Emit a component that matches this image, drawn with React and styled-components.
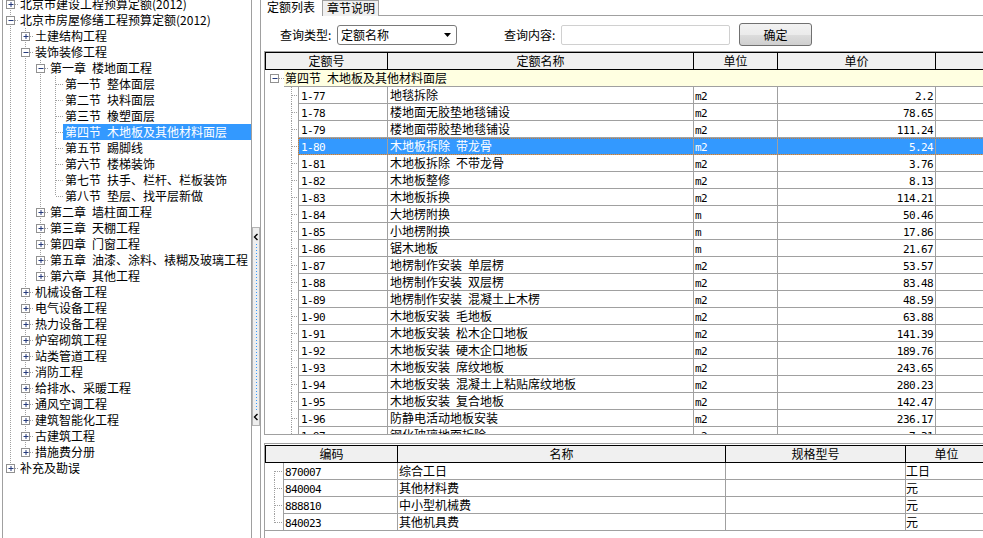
import React from 'react'
import styled, { createGlobalStyle } from 'styled-components'

const CJK = '"Noto Sans CJK SC", "Noto Sans", sans-serif'
const MONO = '"DejaVu Sans Mono", "Liberation Mono", monospace'
const LINE = '#a0a0a0'
const BLUE = '#3399ff'
const sp = '\u2002'

const leaves = (list) => list.map((label) => ({ label }))

const treeData = [
  { label: '北京市建设工程预算定额(2012)', closed: true },
  {
    label: '北京市房屋修缮工程预算定额(2012)',
    children: [
      { label: '土建结构工程', closed: true },
      {
        label: '装饰装修工程',
        children: [
          {
            label: `第一章${sp}楼地面工程`,
            children: leaves([
              `第一节${sp}整体面层`,
              `第二节${sp}块料面层`,
              `第三节${sp}橡塑面层`,
              `第四节${sp}木地板及其他材料面层`,
              `第五节${sp}踢脚线`,
              `第六节${sp}楼梯装饰`,
              `第七节${sp}扶手、栏杆、栏板装饰`,
              `第八节${sp}垫层、找平层新做`,
            ]),
          },
          { label: `第二章${sp}墙柱面工程`, closed: true },
          { label: `第三章${sp}天棚工程`, closed: true },
          { label: `第四章${sp}门窗工程`, closed: true },
          { label: `第五章${sp}油漆、涂料、裱糊及玻璃工程`, closed: true },
          { label: `第六章${sp}其他工程`, closed: true },
        ],
      },
      { label: '机械设备工程', closed: true },
      { label: '电气设备工程', closed: true },
      { label: '热力设备工程', closed: true },
      { label: '炉窑砌筑工程', closed: true },
      { label: '站类管道工程', closed: true },
      { label: '消防工程', closed: true },
      { label: '给排水、采暖工程', closed: true },
      { label: '通风空调工程', closed: true },
      { label: '建筑智能化工程', closed: true },
      { label: '古建筑工程', closed: true },
      { label: '措施费分册', closed: true },
    ],
  },
  { label: '补充及勘误', closed: true },
]

const SELECTED = `第四节${sp}木地板及其他材料面层`

function flatten(nodes, depth = 0, guides = []) {
  return nodes.flatMap((node, i) => {
    const hasNext = i < nodes.length - 1
    const row = {
      label: node.label,
      depth,
      guides,
      hasNext,
      first: depth === 0 && i === 0,
      box: node.children ? 'minus' : node.closed ? 'plus' : null,
    }
    const kids = node.children ? flatten(node.children, depth + 1, [...guides, hasNext]) : []
    return [row, ...kids]
  })
}

const quotas = [
  ['1-77', '地毯拆除', 'm2', '2.2'],
  ['1-78', '楼地面无胶垫地毯铺设', 'm2', '78.65'],
  ['1-79', '楼地面带胶垫地毯铺设', 'm2', '111.24'],
  ['1-80', `木地板拆除${sp}带龙骨`, 'm2', '5.24'],
  ['1-81', `木地板拆除${sp}不带龙骨`, 'm2', '3.76'],
  ['1-82', '木地板整修', 'm2', '8.13'],
  ['1-83', '木地板拆换', 'm2', '114.21'],
  ['1-84', '大地楞附换', 'm', '50.46'],
  ['1-85', '小地楞附换', 'm', '17.86'],
  ['1-86', '锯木地板', 'm', '21.67'],
  ['1-87', `地楞制作安装${sp}单层楞`, 'm2', '53.57'],
  ['1-88', `地楞制作安装${sp}双层楞`, 'm2', '83.48'],
  ['1-89', `地楞制作安装${sp}混凝土上木楞`, 'm2', '48.59'],
  ['1-90', `木地板安装${sp}毛地板`, 'm2', '63.88'],
  ['1-91', `木地板安装${sp}松木企口地板`, 'm2', '141.39'],
  ['1-92', `木地板安装${sp}硬木企口地板`, 'm2', '189.76'],
  ['1-93', `木地板安装${sp}席纹地板`, 'm2', '243.65'],
  ['1-94', `木地板安装${sp}混凝土上粘贴席纹地板`, 'm2', '280.23'],
  ['1-95', `木地板安装${sp}复合地板`, 'm2', '142.47'],
  ['1-96', '防静电活动地板安装', 'm2', '236.17'],
  ['1-97', '钢化玻璃地面拆除', 'm2', '7.31'],
]

const resources = [
  ['870007', '综合工日', '', '工日'],
  ['840004', '其他材料费', '', '元'],
  ['888810', '中小型机械费', '', '元'],
  ['840023', '其他机具费', '', '元'],
]

const quotaCols = [122, 306, 84, 158, 60]
const resourceCols = [132, 328, 180, 82]

function ExpandBox({ x, open }) {
  return (
    <g>
      <rect x={x - 4} y={4.5} width={8} height={8} fill='#fff' stroke='#919191' />
      <line x1={x - 2} y1={8.5} x2={x + 3} y2={8.5} stroke='#24397a' />
      {!open && <line x1={x + 0.5} y1={6} x2={x + 0.5} y2={11} stroke='#24397a' />}
    </g>
  )
}

function Guide({ line }) {
  return (
    <LinesSvg width='15' height='16'>
      {line && <line x1='7.5' y1='0' x2='7.5' y2='16' stroke={LINE} strokeDasharray='1 1' />}
    </LinesSvg>
  )
}

function Joint({ row }) {
  return (
    <LinesSvg width='15' height='16'>
      {!row.first && <line x1='7.5' y1='0' x2='7.5' y2='8' stroke={LINE} strokeDasharray='1 1' />}
      {row.hasNext && <line x1='7.5' y1='8' x2='7.5' y2='16' stroke={LINE} strokeDasharray='1 1' />}
      <line x1='8' y1='8.5' x2='15' y2='8.5' stroke={LINE} strokeDasharray='1 1' />
      {row.box && <ExpandBox x={7.5} open={row.box === 'minus'} />}
    </LinesSvg>
  )
}

function Chevron() {
  return (
    <ChevronSvg width='6' height='8'>
      <path d='M4.5 1 L1.5 4 L4.5 7' fill='none' stroke='#000' strokeWidth='1.4' />
    </ChevronSvg>
  )
}

function TreePanel() {
  const rows = flatten(treeData)
  return (
    <TreePane>
      <TreeList>
        {rows.map((row) => (
          <TreeRow key={row.label}>
            {row.guides.map((g, i) => (
              <Guide key={i} line={g} />
            ))}
            <Joint row={row} />
            <TreeLabel $selected={row.label === SELECTED}>{row.label}</TreeLabel>
          </TreeRow>
        ))}
      </TreeList>
    </TreePane>
  )
}

function QuotaGrid() {
  return (
    <GridBox $height={384}>
      <HeadRow>
        {['定额号', '定额名称', '单位', '单价', ''].map((t, i) => (
          <HeadCell key={i} $w={quotaCols[i]}>
            {t}
          </HeadCell>
        ))}
      </HeadRow>
      <GroupRow>
        <LinesSvg width='19' height='17'>
          <ExpandBox x={9.5} open />
          <line x1='14' y1='8.5' x2='19' y2='8.5' stroke={LINE} strokeDasharray='1 1' />
        </LinesSvg>
        <GroupCell>第四节{sp}木地板及其他材料面层</GroupCell>
      </GroupRow>
      {quotas.map(([code, name, unit, price]) => {
        const selected = code === '1-80'
        return (
          <BodyRow key={code}>
            <LinesSvg width='33' height='17'>
              <line x1='26.5' y1='0' x2='26.5' y2='17' stroke={LINE} strokeDasharray='1 1' />
              <line x1='27' y1='8.5' x2='33' y2='8.5' stroke={LINE} strokeDasharray='1 1' />
            </LinesSvg>
            <Cells $selected={selected}>
              <Cell $w={90} $first>
                <Num>{code}</Num>
              </Cell>
              <Cell $w={quotaCols[1]}>{name}</Cell>
              <Cell $w={quotaCols[2]} $pad={1}>
                <Num>{unit}</Num>
              </Cell>
              <Cell $w={quotaCols[3]} $right>
                <Num>{price}</Num>
              </Cell>
              <Cell $w={quotaCols[4]} />
            </Cells>
          </BodyRow>
        )
      })}
    </GridBox>
  )
}

function ResourceGrid() {
  return (
    <ResourceBox>
      <HeadRow>
        {['编码', '名称', '规格型号', '单位'].map((t, i) => (
          <HeadCell key={i} $w={resourceCols[i]}>
            {t}
          </HeadCell>
        ))}
      </HeadRow>
      {resources.map(([code, name, spec, unit], i) => {
        const first = i === 0
        const last = i === resources.length - 1
        return (
          <BodyRow key={code} $underline={last}>
            <LinesSvg width='18' height='17'>
              <line
                x1='9.5'
                y1={first ? 8 : 0}
                x2='9.5'
                y2={last ? 9 : 17}
                stroke={LINE}
                strokeDasharray='1 1'
              />
              <line x1='10' y1='8.5' x2='18' y2='8.5' stroke={LINE} strokeDasharray='1 1' />
            </LinesSvg>
            <Cells>
              <Cell $w={115} $first $pad={1}>
                <Num>{code}</Num>
              </Cell>
              <Cell $w={resourceCols[1]} $pad={1}>
                {name}
              </Cell>
              <Cell $w={resourceCols[2]}>{spec}</Cell>
              <Cell $w={resourceCols[3]} $pad={0}>
                {unit}
              </Cell>
            </Cells>
          </BodyRow>
        )
      })}
    </ResourceBox>
  )
}

export default function App() {
  return (
    <>
      <GlobalStyle />
      <Screen>
        <TreePanel />
        <Splitter>
          <Grip>
            <Chevron />
            <GripDots />
            <Chevron />
          </Grip>
        </Splitter>
        <MainPane>
          <Tabs>
            <Tab $active>定额列表</Tab>
            <Tab>章节说明</Tab>
            <TabFill />
          </Tabs>
          <QueryBar>
            <FieldLabel>查询类型:</FieldLabel>
            <Select>
              <span>定额名称</span>
              <svg width='7' height='4'>
                <path d='M0 0 H7 L3.5 4 Z' fill='#000' />
              </svg>
            </Select>
            <FieldLabel $gap={47}>查询内容:</FieldLabel>
            <TextInput />
            <Button>确定</Button>
          </QueryBar>
          <QuotaGrid />
          <ResourceGrid />
        </MainPane>
      </Screen>
    </>
  )
}

const GlobalStyle = createGlobalStyle`
  html, body {
    margin: 0;
    padding: 0;
    background: #fff;
  }
  body {
    font-family: ${CJK};
    font-size: 12px;
    color: #000;
  }
  * {
    box-sizing: border-box;
  }
`

const Screen = styled.div`
  display: flex;
  width: 983px;
  height: 538px;
  overflow: hidden;
  background: #fff;
`

const TreePane = styled.div`
  flex-shrink: 0;
  width: 250px;
  height: 538px;
  margin-left: 2px;
  border-left: 1px solid ${LINE};
  border-right: 1px solid ${LINE};
  overflow: hidden;
`

const TreeList = styled.div`
  display: flex;
  flex-direction: column;
  margin-top: -4px;
`

const TreeRow = styled.div`
  display: flex;
  height: 16px;
`

const LinesSvg = styled.svg`
  display: block;
  flex-shrink: 0;
`

const TreeLabel = styled.span`
  flex: ${(p) => (p.$selected ? 1 : 'none')};
  height: 16px;
  line-height: 16px;
  padding: 0 2px;
  white-space: nowrap;
  background: ${(p) => (p.$selected ? BLUE : 'transparent')};
  color: ${(p) => (p.$selected ? '#fff' : '#000')};
`

const Splitter = styled.div`
  flex-shrink: 0;
  width: 9px;
  height: 538px;
  padding-top: 227px;
  border-right: 1px solid ${LINE};
`

const Grip = styled.div`
  display: flex;
  flex-direction: column;
  align-items: center;
  width: 8px;
  height: 199px;
  padding: 5px 0 4px;
  background: #eeeeee;
  border: 1px solid #b4b4b4;
`

const ChevronSvg = styled.svg`
  display: block;
  flex-shrink: 0;
`

const GripDots = styled.div`
  flex: 1;
  width: 1px;
  margin: 3px 0;
  background: repeating-linear-gradient(to bottom, ${BLUE} 0 1px, transparent 1px 3px);
`

const MainPane = styled.div`
  display: flex;
  flex-direction: column;
  flex: 1;
  min-width: 0;
  padding-left: 2px;
`

const Tabs = styled.div`
  display: flex;
  height: 16px;
`

const Tab = styled.div`
  width: ${(p) => (p.$active ? 59 : 57)}px;
  height: 16px;
  padding-left: 4px;
  line-height: 14px;
  white-space: nowrap;
  background: ${(p) => (p.$active ? '#fff' : '#f0f0f0')};
  border: ${(p) => (p.$active ? 'none' : `1px solid ${LINE}`)};
  border-bottom: none;
`

const TabFill = styled.div`
  flex: 1;
  border-bottom: 1px solid ${LINE};
`

const QueryBar = styled.div`
  display: flex;
  align-items: center;
  height: 23px;
  margin-top: 7px;
  padding-left: 17px;
`

const FieldLabel = styled.span`
  width: 57px;
  margin-left: ${(p) => p.$gap || 0}px;
  white-space: nowrap;
`

const Select = styled.div`
  display: flex;
  align-items: center;
  justify-content: space-between;
  width: 120px;
  height: 20px;
  padding: 0 5px 0 3px;
  border: 1px solid #7a7a7a;
  border-radius: 3px;
  background: #fff;
`

const TextInput = styled.div`
  width: 169px;
  height: 20px;
  border: 1px solid #d0d0d0;
  border-radius: 2px;
  background: #fff;
`

const Button = styled.div`
  display: flex;
  align-items: center;
  justify-content: center;
  width: 73px;
  height: 23px;
  margin-left: 9px;
  border: 1px solid #707070;
  border-radius: 3px;
  background: linear-gradient(to bottom, #f2f2f2 0%, #ebebeb 50%, #dddddd 51%, #cfcfcf 100%);
`

const GridBox = styled.div`
  display: flex;
  flex-direction: column;
  flex-shrink: 0;
  height: ${(p) => p.$height}px;
  margin: 5px 0 0 1px;
  border-left: 1px solid ${LINE};
  border-top: 1px solid ${LINE};
  border-bottom: 1px solid ${LINE};
  overflow: hidden;
`

const ResourceBox = styled.div`
  display: flex;
  flex-direction: column;
  flex: 1;
  margin: 8px 0 0 1px;
  padding-top: 1px;
  border-left: 1px solid ${LINE};
  border-top: 1px solid ${LINE};
  overflow: hidden;
`

const HeadRow = styled.div`
  display: flex;
  flex-shrink: 0;
  height: 18px;
  background: #f0f0f0;
  border-top: 1px solid #000;
  border-bottom: 1px solid #000;
  border-left: 1px solid #000;
`

const HeadCell = styled.div`
  flex-shrink: 0;
  width: ${(p) => p.$w}px;
  line-height: 16px;
  text-align: center;
  white-space: nowrap;
  border-right: 1px solid #000;
`

const GroupRow = styled.div`
  display: flex;
  flex-shrink: 0;
  height: 17px;
`

const GroupCell = styled.div`
  flex: 1;
  padding-left: 1px;
  line-height: 16px;
  white-space: nowrap;
  background: #ffffe1;
  border-bottom: 1px solid ${LINE};
`

const BodyRow = styled.div`
  display: flex;
  flex-shrink: 0;
  height: 17px;
  border-bottom: ${(p) => (p.$underline ? `1px solid ${LINE}` : 'none')};
  & > svg {
    margin-bottom: ${(p) => (p.$underline ? -1 : 0)}px;
  }
`

const Cells = styled.div`
  display: flex;
  flex: 1;
  background: ${(p) => (p.$selected ? BLUE : '#fff')};
  color: ${(p) => (p.$selected ? '#fff' : '#000')};
  outline: ${(p) => (p.$selected ? '1px dotted #c47a35' : 'none')};
  outline-offset: -1px;
`

const Cell = styled.div`
  flex-shrink: 0;
  width: ${(p) => p.$w}px;
  height: 17px;
  padding: 0 ${(p) => (p.$right ? 2 : 0)}px 0 ${(p) => (p.$pad ?? 2)}px;
  line-height: 16px;
  white-space: nowrap;
  overflow: hidden;
  text-align: ${(p) => (p.$right ? 'right' : 'left')};
  border-left: ${(p) => (p.$first ? `1px solid ${LINE}` : 'none')};
  border-right: 1px solid ${LINE};
  border-bottom: 1px solid ${LINE};
`

const Num = styled.span`
  font-family: ${MONO};
  font-size: 11px;
  letter-spacing: -0.6px;
`
